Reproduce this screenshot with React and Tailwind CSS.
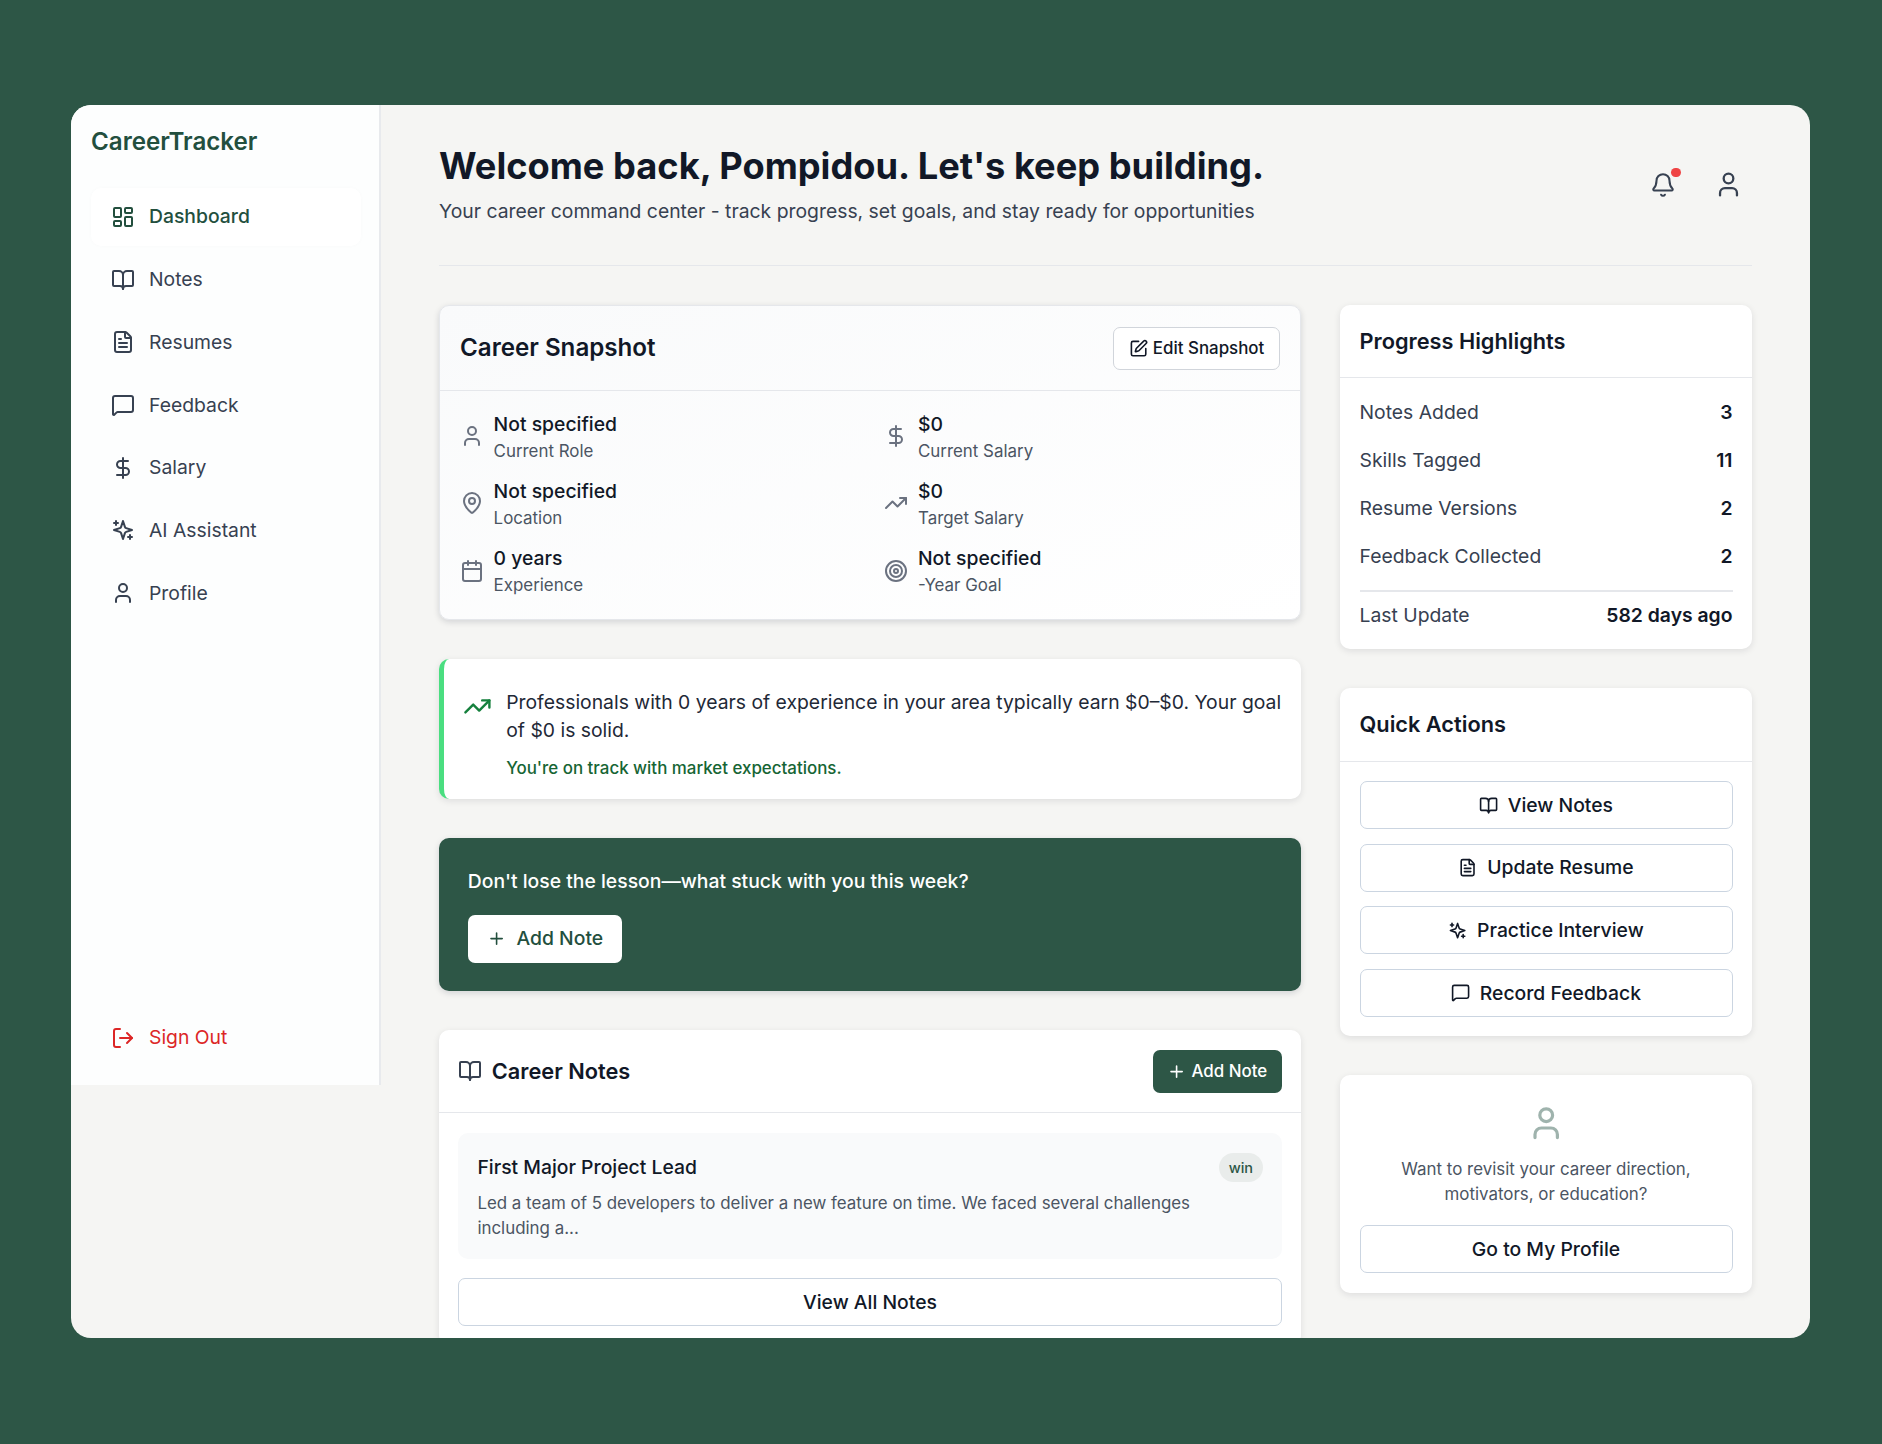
import {
  BookOpen,
  Bell,
  Calendar,
  DollarSign,
  FileText,
  LayoutDashboard,
  LogOut,
  MapPin,
  MessageSquare,
  Plus,
  SquarePen,
  Target,
  TrendingUp,
  User,
} from 'lucide-react';

// older lucide sparkles, the plus marks sit top-left and bottom-right
const Sparkle = ({ className }) => (
  <svg
    viewBox="0 0 24 24"
    fill="none"
    stroke="currentColor"
    strokeWidth="2"
    strokeLinecap="round"
    strokeLinejoin="round"
    className={className}
  >
    <path d="m12 3-1.912 5.813a2 2 0 0 1-1.275 1.275L3 12l5.813 1.912a2 2 0 0 1 1.275 1.275L12 21l1.912-5.813a2 2 0 0 1 1.275-1.275L21 12l-5.813-1.912a2 2 0 0 1-1.275-1.275L12 3Z" />
    <path d="M5 3v4" />
    <path d="M19 17v4" />
    <path d="M3 5h4" />
    <path d="M17 19h4" />
  </svg>
);

const navItems = [
  { label: 'Dashboard', icon: LayoutDashboard, active: true },
  { label: 'Notes', icon: BookOpen },
  { label: 'Resumes', icon: FileText },
  { label: 'Feedback', icon: MessageSquare },
  { label: 'Salary', icon: DollarSign },
  { label: 'AI Assistant', icon: Sparkle },
  { label: 'Profile', icon: User },
];

const snapshot = [
  { icon: User, value: 'Not specified', label: 'Current Role' },
  { icon: DollarSign, value: '$0', label: 'Current Salary' },
  { icon: MapPin, value: 'Not specified', label: 'Location' },
  { icon: TrendingUp, value: '$0', label: 'Target Salary' },
  { icon: Calendar, value: '0 years', label: 'Experience' },
  { icon: Target, value: 'Not specified', label: '-Year Goal' },
];

const highlights = [
  ['Notes Added', '3'],
  ['Skills Tagged', '11'],
  ['Resume Versions', '2'],
  ['Feedback Collected', '2'],
];

const quickActions = [
  { label: 'View Notes', icon: BookOpen },
  { label: 'Update Resume', icon: FileText },
  { label: 'Practice Interview', icon: Sparkle },
  { label: 'Record Feedback', icon: MessageSquare },
];

const cardClass = 'rounded-[10px] bg-white shadow-[0_2px_7px_rgba(15,23,42,0.1)]';
const outlineBtn =
  'flex h-[48px] w-full items-center justify-center gap-[9.6px] rounded-[7px] border border-[#cbd5e1] bg-white text-[19.35px] font-medium text-[#111827]';

const Sidebar = () => (
  <aside className="flex h-[980px] w-[310px] shrink-0 flex-col border-r-2 border-[#e8eaed] bg-[#fdfefe] px-[20px]">
    <div className="pt-[21px] text-[24.15px] leading-[32px] font-semibold text-[#234f3e]">CareerTracker</div>
    <nav className="mt-[30px] flex flex-col gap-[4.7px]">
      {navItems.map(({ label, icon: Icon, active }) => (
        <div
          key={label}
          className={`flex h-[58px] w-[270px] items-center gap-[14px] rounded-[10px] pl-[20px] text-[19.35px] ${
            active ? 'bg-white font-medium text-[#234f3e] shadow-[0_0_4px_rgba(15,23,42,0.02)]' : 'text-[#374151]'
          }`}
        >
          <Icon className="h-[24px] w-[24px]" strokeWidth={2} />
          {label}
        </div>
      ))}
    </nav>
    <div className="mt-auto mb-[18px] flex h-[58px] items-center gap-[14px] pl-[20px] text-[19.35px] text-[#dc2626]">
      <LogOut className="h-[24px] w-[24px]" strokeWidth={2} />
      Sign Out
    </div>
  </aside>
);

const Header = () => (
  <header className="flex items-center justify-between border-b border-[#e5e7eb] pb-[40px]">
    <div>
      <h1 className="text-[36.25px] leading-[48px] font-bold text-[#111827]">Welcome back, Pompidou. Let's keep building.</h1>
      <p className="mt-[6.6px] text-[19.35px] leading-[28.8px] text-[#374151]">
        Your career command center - track progress, set goals, and stay ready for opportunities
      </p>
    </div>
    <div className="mt-[2px] flex items-center gap-[38px] pr-[9px]">
      <div className="relative">
        <Bell className="h-[26px] w-[26px] text-[#374151]" strokeWidth={1.9} />
        <span className="absolute -top-[4px] right-[-4.6px] h-[9.6px] w-[9.6px] rounded-full bg-[#ef4444]" />
      </div>
      <User className="h-[29px] w-[29px] text-[#374151]" strokeWidth={1.9} />
    </div>
  </header>
);

const CareerSnapshot = () => (
  <section className="rounded-[10px] border border-[#e5e7eb] bg-gradient-to-br from-[#f9fafb] to-white shadow-[0_2px_6px_rgba(15,23,42,0.15)]">
    <div className="flex h-[85px] items-center justify-between border-b border-[#e5e7eb] px-[20px]">
      <h2 className="text-[24.15px] font-semibold text-[#111827]">Career Snapshot</h2>
      <button className="flex h-[43px] w-[167px] items-center justify-center gap-[5px] rounded-[7px] border border-[#d1d5db] bg-white text-[16.9px] font-medium text-[#111827]">
        <SquarePen className="h-[19.2px] w-[19.2px]" strokeWidth={2} />
        Edit Snapshot
      </button>
    </div>
    <div className="grid grid-cols-2 gap-x-[28.8px] gap-y-[14.4px] px-[20px] pt-[18.5px] pb-[21.5px]">
      {snapshot.map(({ icon: Icon, value, label }) => (
        <div key={label} className="flex items-center gap-[9.6px]">
          <Icon className="h-[24px] w-[24px] shrink-0 text-[#6b7280]" strokeWidth={2} />
          <div>
            <div className="text-[19.35px] leading-[28.8px] font-medium text-[#111827]">{value}</div>
            <div className="text-[16.9px] leading-[24px] text-[#4b5563]">{label}</div>
          </div>
        </div>
      ))}
    </div>
  </section>
);

const MarketInsight = () => (
  <section className={`${cardClass} flex gap-[14.4px] border-l-[5px] border-[#4ade80] pt-[29px] pr-[14px] pb-[19px] pl-[19px]`}>
    <TrendingUp className="mt-[4px] h-[28.8px] w-[28.8px] shrink-0 text-[#15803d]" strokeWidth={2} />
    <div>
      <p className="text-[19.35px] leading-[28.8px] text-[#1f2937]">
        Professionals with 0 years of experience in your area typically earn $0–$0. Your goal of $0 is solid.
      </p>
      <p className="mt-[10.6px] text-[16.9px] leading-[24px] font-medium text-[#166534]">You're on track with market expectations.</p>
    </div>
  </section>
);

const NotePrompt = () => (
  <section className="rounded-[10px] bg-[#2d5646] p-[28.8px] shadow-[0_2px_6px_rgba(15,23,42,0.15)]">
    <p className="text-[19.35px] leading-[28.8px] font-medium text-white">Don't lose the lesson—what stuck with you this week?</p>
    <button className="mt-[19.2px] flex h-[48px] w-[154px] items-center gap-[10.5px] rounded-[7px] bg-white pl-[19px] text-[19.35px] font-medium text-[#234f3e]">
      <Plus className="h-[19.2px] w-[19.2px]" strokeWidth={2} />
      Add Note
    </button>
  </section>
);

const CareerNotes = () => (
  <section className={cardClass}>
    <div className="flex h-[83px] items-center justify-between border-b border-[#e5e7eb] px-[19.2px]">
      <div className="flex items-center gap-[9.6px]">
        <BookOpen className="h-[24px] w-[24px] text-[#374151]" strokeWidth={2} />
        <h2 className="text-[21.75px] font-semibold text-[#111827]">Career Notes</h2>
      </div>
      <button className="flex h-[43px] w-[129px] items-center justify-center gap-[4.8px] rounded-[7px] bg-[#2d5646] text-[16.9px] font-medium text-white">
        <Plus className="h-[19.2px] w-[19.2px]" strokeWidth={2} />
        Add Note
      </button>
    </div>
    <div className="p-[19.2px]">
      <div className="rounded-[10px] bg-[#f9fafb] px-[19.2px] pt-[20px] pb-[18px]">
        <div className="flex items-center justify-between">
          <h3 className="text-[19.35px] leading-[28.8px] font-medium text-[#111827]">First Major Project Lead</h3>
          <span className="rounded-full bg-[#e9eceb] px-[9.6px] text-[14.5px] leading-[29px] font-medium text-[#2d5646]">win</span>
        </div>
        <p className="mt-[9px] w-[760px] text-[16.9px] leading-[25.2px] text-[#4b5563]">
          Led a team of 5 developers to deliver a new feature on time. We faced several challenges including a...
        </p>
      </div>
      <button className={`${outlineBtn} mt-[19.2px]`}>View All Notes</button>
    </div>
  </section>
);

const ProgressHighlights = () => (
  <section className={cardClass}>
    <div className="flex h-[73px] items-center border-b border-[#e5e7eb] px-[19.5px]">
      <h2 className="text-[21.75px] font-semibold text-[#111827]">Progress Highlights</h2>
    </div>
    <div className="px-[19.5px] py-[19.2px]">
      <div className="flex flex-col gap-[19.2px]">
        {highlights.map(([label, value]) => (
          <div key={label} className="flex justify-between text-[19.35px] leading-[28.8px]">
            <span className="text-[#374151]">{label}</span>
            <span className="font-semibold text-[#111827]">{value}</span>
          </div>
        ))}
      </div>
      <div className="mt-[19.2px] flex justify-between border-t-2 border-[#e5e7eb] pt-[9.6px] text-[19.35px] leading-[28.8px]">
        <span className="text-[#374151]">Last Update</span>
        <span className="font-semibold text-[#111827]">582 days ago</span>
      </div>
    </div>
  </section>
);

const QuickActions = () => (
  <section className={cardClass}>
    <div className="flex h-[74px] items-center border-b border-[#e5e7eb] px-[19.5px]">
      <h2 className="text-[21.75px] font-semibold text-[#111827]">Quick Actions</h2>
    </div>
    <div className="flex flex-col gap-[14.6px] px-[19.5px] py-[19.2px]">
      {quickActions.map(({ label, icon: Icon }) => (
        <button key={label} className={outlineBtn}>
          <Icon className="h-[19.2px] w-[19.2px]" strokeWidth={2} />
          {label}
        </button>
      ))}
    </div>
  </section>
);

const ProfilePrompt = () => (
  <section className={`${cardClass} flex flex-col items-center px-[19.5px] pt-[28.8px] pb-[19.2px]`}>
    <User className="h-[38.4px] w-[38.4px] text-[#9fb3ad]" strokeWidth={2} />
    <p className="mt-[14.4px] text-center text-[16.9px] leading-[25.2px] text-[#4b5563]">
      Want to revisit your career direction,
      <br />
      motivators, or education?
    </p>
    <button className={`${outlineBtn} mt-[18.2px]`}>Go to My Profile</button>
  </section>
);

const App = () => (
  <div className="min-h-[1444px] bg-[#2d5646] pt-[105px] pr-[72px] pl-[71px] font-['Inter',sans-serif]">
    <div className="flex h-[1233px] overflow-hidden rounded-[20px] bg-[#f5f5f3]">
      <Sidebar />
      <main className="min-w-0 flex-1 px-[58px] pt-[37px]">
        <Header />
        <div className="mt-[39px] grid grid-cols-[862px_412px] gap-x-[39px]">
          <div className="flex flex-col gap-[39px]">
            <CareerSnapshot />
            <MarketInsight />
            <NotePrompt />
            <CareerNotes />
          </div>
          <div className="flex flex-col gap-[39px]">
            <ProgressHighlights />
            <QuickActions />
            <ProfilePrompt />
          </div>
        </div>
      </main>
    </div>
  </div>
);

export default App;
